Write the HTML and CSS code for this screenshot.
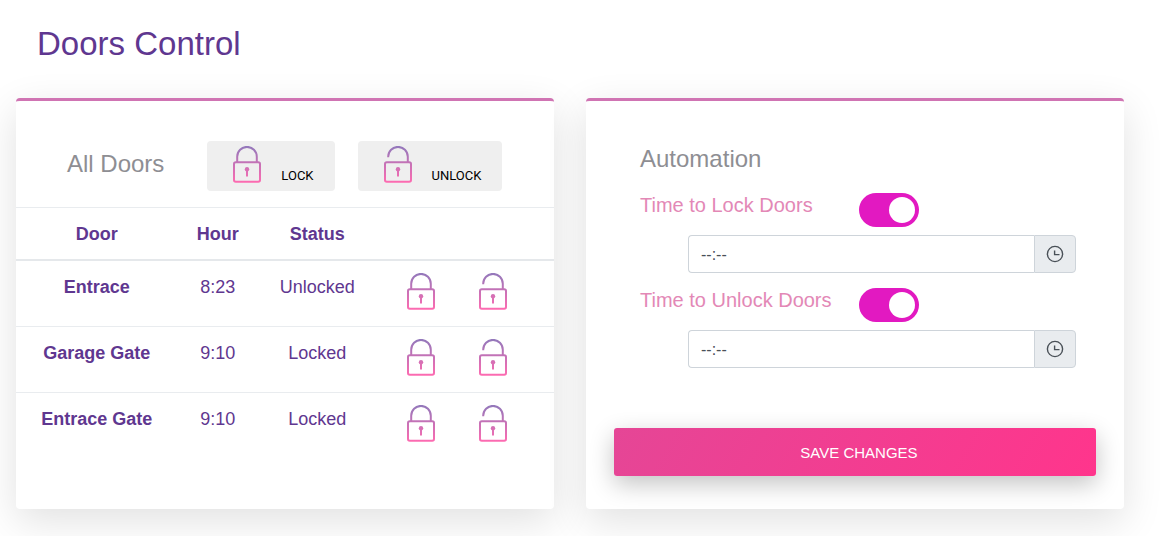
FILE: index.html
```html
<!DOCTYPE html>
<html lang="en">
<head>
<meta charset="utf-8">
<meta name="viewport" content="width=device-width, initial-scale=1">
<title>Doors Control</title>
<link rel="stylesheet" href="styles.css">
</head>
<body>
<svg class="sprite" width="0" height="0" aria-hidden="true">
  <defs>
    <linearGradient id="fade" gradientUnits="userSpaceOnUse" x1="0" y1="0" x2="0" y2="37">
      <stop offset="0" stop-color="#9278bb"/>
      <stop offset="1" stop-color="#ff6bb1"/>
    </linearGradient>
    <symbol id="lock" viewBox="0 0 28 37">
      <g fill="none" stroke="url(#fade)" stroke-width="2">
        <rect x="1" y="16.3" width="26" height="19.5" rx="1.8"/>
        <path d="M4.2 16V10.7a9.8 9.8 0 0 1 19.6 0V16"/>
        <path d="M14 23v7.5"/>
      </g>
      <circle cx="14" cy="23.3" r="2.2" fill="url(#fade)"/>
    </symbol>
    <symbol id="unlock" viewBox="0 0 28 37">
      <g fill="none" stroke="url(#fade)" stroke-width="2">
        <rect x="1" y="16.3" width="26" height="19.5" rx="1.8"/>
        <path d="M4.2 11.3V10.7a9.8 9.8 0 0 1 19.6 0V16"/>
        <path d="M14 23v7.5"/>
      </g>
      <circle cx="14" cy="23.3" r="2.2" fill="url(#fade)"/>
    </symbol>
    <symbol id="clock" viewBox="0 0 18 18">
      <g fill="none" stroke="#495057" stroke-width="1.4">
        <circle cx="9" cy="9" r="7.6"/>
        <path d="M8.6 5.5V9.6H13.5"/>
      </g>
    </symbol>
  </defs>
</svg>

<main class="page">
  <h1 class="page-title">Doors Control</h1>
  <div class="cards">
    <section class="card">
      <div class="all-doors">
        <h2 class="card-title">All Doors</h2>
        <button class="bulk" type="button"><svg class="padlock"><use href="#lock"/></svg><span>LOCK</span></button>
        <button class="bulk" type="button"><svg class="padlock"><use href="#unlock"/></svg><span>UNLOCK</span></button>
      </div>
      <table class="doors">
        <colgroup><col class="col-door"><col class="col-hour"><col class="col-status"><col class="col-lock"><col></colgroup>
        <thead>
          <tr><th scope="col">Door</th><th scope="col">Hour</th><th scope="col">Status</th><th></th><th></th></tr>
        </thead>
        <tbody>
          <tr>
            <th scope="row">Entrace</th><td>8:23</td><td>Unlocked</td>
            <td class="lock-cell"><button class="icon-button" type="button" aria-label="Lock Entrace"><svg class="padlock"><use href="#lock"/></svg></button></td>
            <td class="unlock-cell"><button class="icon-button" type="button" aria-label="Unlock Entrace"><svg class="padlock"><use href="#unlock"/></svg></button></td>
          </tr>
          <tr>
            <th scope="row">Garage Gate</th><td>9:10</td><td>Locked</td>
            <td class="lock-cell"><button class="icon-button" type="button" aria-label="Lock Garage Gate"><svg class="padlock"><use href="#lock"/></svg></button></td>
            <td class="unlock-cell"><button class="icon-button" type="button" aria-label="Unlock Garage Gate"><svg class="padlock"><use href="#unlock"/></svg></button></td>
          </tr>
          <tr>
            <th scope="row">Entrace Gate</th><td>9:10</td><td>Locked</td>
            <td class="lock-cell"><button class="icon-button" type="button" aria-label="Lock Entrace Gate"><svg class="padlock"><use href="#lock"/></svg></button></td>
            <td class="unlock-cell"><button class="icon-button" type="button" aria-label="Unlock Entrace Gate"><svg class="padlock"><use href="#unlock"/></svg></button></td>
          </tr>
        </tbody>
      </table>
    </section>

    <section class="card">
      <form class="automation">
        <h2 class="card-title">Automation</h2>
        <div class="setting">
          <label class="setting-label" for="lock-on">Time to Lock Doors</label>
          <input class="switch" id="lock-on" type="checkbox" checked>
        </div>
        <div class="time-group">
          <input class="time" type="text" placeholder="--:--" aria-label="Lock time">
          <button class="time-pick" type="button" aria-label="Pick lock time"><svg class="clock"><use href="#clock"/></svg></button>
        </div>
        <div class="setting">
          <label class="setting-label" for="unlock-on">Time to Unlock Doors</label>
          <input class="switch" id="unlock-on" type="checkbox" checked>
        </div>
        <div class="time-group">
          <input class="time" type="text" placeholder="--:--" aria-label="Unlock time">
          <button class="time-pick" type="button" aria-label="Pick unlock time"><svg class="clock"><use href="#clock"/></svg></button>
        </div>
        <button class="save" type="submit">SAVE CHANGES</button>
      </form>
    </section>
  </div>
</main>
</body>
</html>
```
FILE: styles.css
```css
* {
  box-sizing: border-box;
}

body {
  margin: 0;
  background: #fff;
  color: #5f3790;
  font-family: "Liberation Sans", Arial, sans-serif;
  overflow-x: hidden;
}

button,
input {
  font-family: inherit;
}

button {
  cursor: pointer;
}

.sprite {
  position: absolute;
}

.page {
  padding: 24px 46px 27px 16px;
}

.page-title {
  margin: 0 0 34px 21px;
  font-size: 33px;
  font-weight: 400;
  line-height: 40px;
}

.cards {
  display: grid;
  grid-template-columns: 1fr 1fr;
  gap: 32px;
}

.card {
  border-top: 3px solid #d074b3;
  border-radius: 4px;
  background: #fff;
  box-shadow: 0 12px 40px rgba(0, 0, 0, 0.12);
}

.card-title {
  margin: 0;
  color: #8e8e93;
  font-size: 24px;
  font-weight: 400;
  line-height: 28px;
}

.all-doors {
  display: flex;
  align-items: center;
  gap: 23px;
  padding: 40px 51px 16px;
}

.all-doors .card-title {
  margin-right: 20px;
  padding-bottom: 4px;
}

.bulk {
  display: flex;
  align-items: flex-end;
  gap: 20px;
  height: 50px;
  padding: 0 21px 8px 26px;
  border: 0;
  border-radius: 4px;
  background: #efefef;
  color: #000;
  font-family: Roboto, sans-serif;
  font-size: 13px;
  line-height: 15px;
}

.padlock {
  display: block;
  flex: none;
  width: 28px;
  height: 37px;
}

.doors {
  width: 100%;
  table-layout: fixed;
  border-collapse: separate;
  border-spacing: 0;
  font-size: 18px;
  line-height: 28px;
  text-align: center;
}

.col-door {
  width: 30%;
}

.col-hour {
  width: 15%;
}

.col-status {
  width: 22%;
}

.col-lock {
  width: 17%;
}

.doors th,
.doors td {
  padding: 12px 0;
  border-top: 1px solid #e9ecef;
  vertical-align: top;
}

.doors thead th {
  padding-bottom: 11px;
  border-bottom: 2px solid #e5e8eb;
}

.doors tbody th,
.doors tbody td {
  padding-bottom: 16px;
}

.doors tbody tr:first-child > * {
  border-top: 0;
}

.icon-button {
  display: block;
  margin: 0 auto;
  padding: 0;
  border: 0;
  background: none;
}

.doors .lock-cell {
  padding-right: 2px;
}

.doors .unlock-cell {
  padding-left: 11px;
}

.unlock-cell .icon-button {
  margin: 0;
}

.automation {
  display: flex;
  flex-direction: column;
  padding: 44px 28px 33px;
}

.automation .card-title {
  margin: 0 26px 20px;
}

.setting {
  display: flex;
  align-items: flex-start;
  margin: 0 26px 8px;
}

.setting-label {
  width: 219px;
  color: #e388b6;
  font-size: 20px;
  line-height: 24px;
}

.switch {
  appearance: none;
  display: flex;
  align-items: center;
  width: 60px;
  height: 34px;
  margin: 0;
  padding: 4px;
  border-radius: 17px;
  background: #ccc;
  cursor: pointer;
}

.switch::before {
  content: "";
  width: 26px;
  height: 26px;
  border-radius: 50%;
  background: #fff;
}

.switch:checked {
  justify-content: flex-end;
  background: #e219c1;
}

.time-group {
  display: flex;
  height: 38px;
  margin: 0 20px 15px 74px;
}

.time {
  flex: 1;
  min-width: 0;
  padding: 8px 12px 6px;
  border: 1px solid #ced4da;
  border-right: 0;
  border-radius: 4px 0 0 4px;
  background: #fff;
  color: #495057;
  font-size: 16px;
}

.time::placeholder {
  color: #495057;
  opacity: 1;
}

.time-pick {
  display: flex;
  align-items: center;
  justify-content: center;
  width: 42px;
  padding: 0;
  border: 1px solid #ced4da;
  border-radius: 0 4px 4px 0;
  background: #e9ecef;
}

.clock {
  width: 18px;
  height: 18px;
}

.save {
  height: 48px;
  margin-top: 45px;
  padding: 0 0 0 8px;
  border: 0;
  border-radius: 3px;
  background: linear-gradient(120deg, #e54696, #ff358c);
  box-shadow: 0 8px 24px rgba(0, 0, 0, 0.24);
  color: #fff;
  font-size: 15px;
}
```
